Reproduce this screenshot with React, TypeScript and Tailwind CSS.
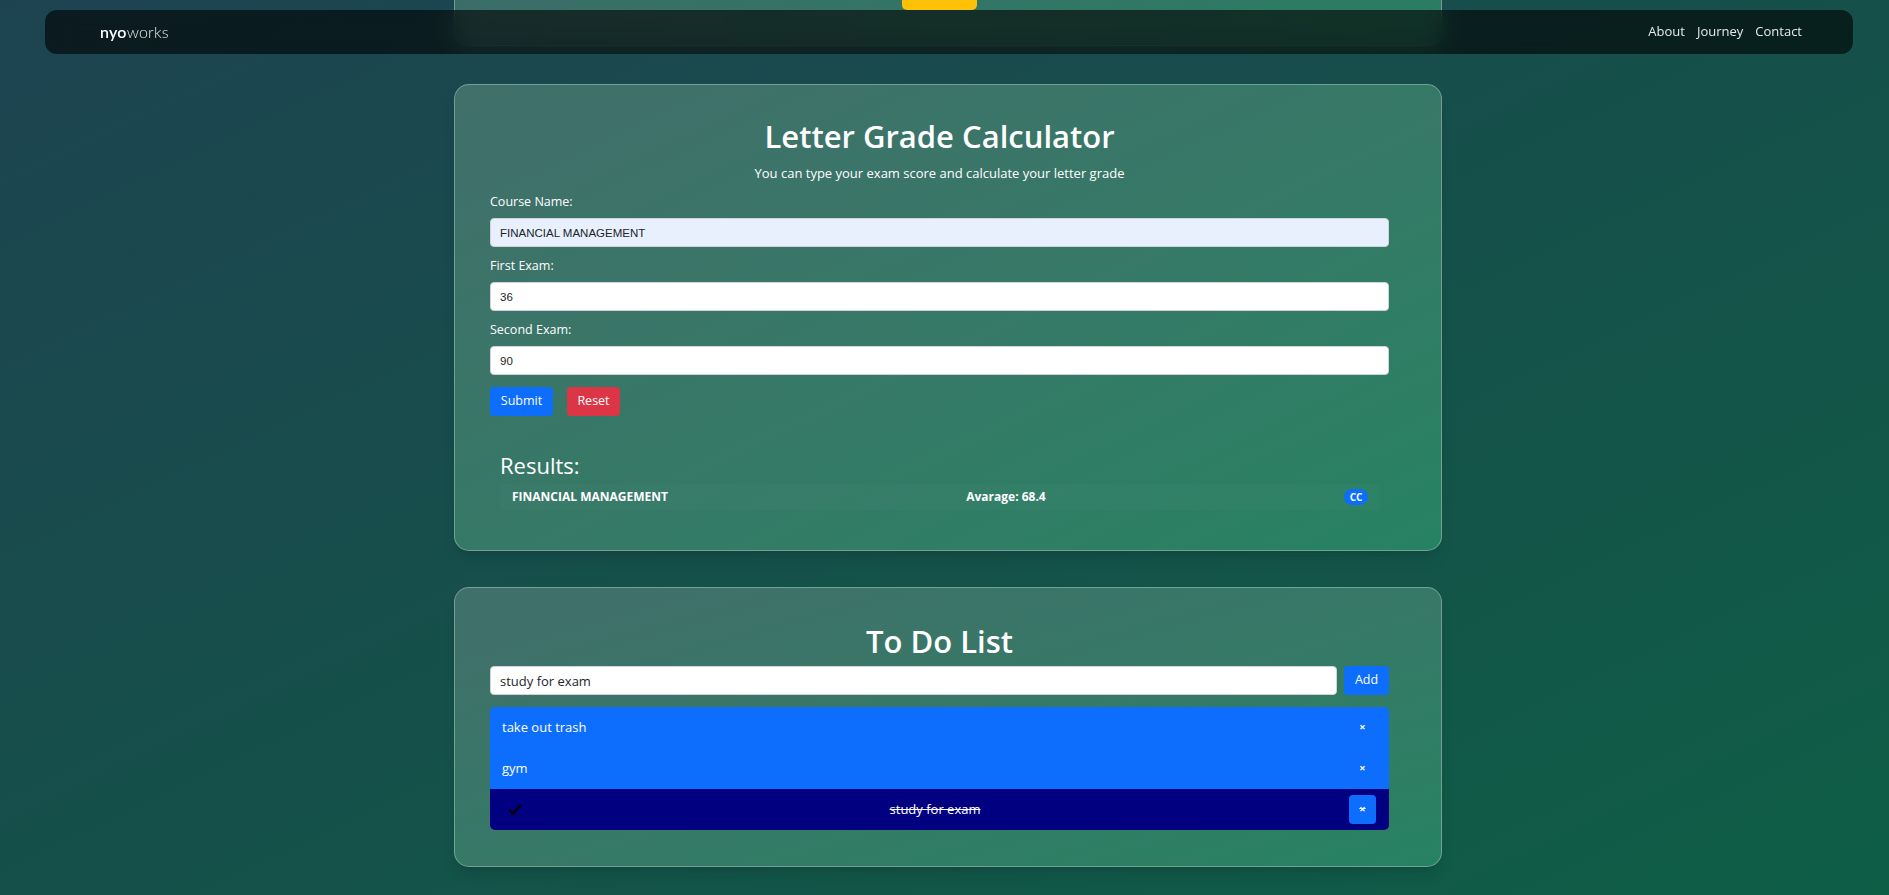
import { useState } from 'react'

type Todo = { id: number; text: string; done: boolean }

const initialTodos: Todo[] = [
  { id: 1, text: 'take out trash', done: false },
  { id: 2, text: 'gym', done: false },
  { id: 3, text: 'study for exam', done: true },
]

function Navbar() {
  return (
    <nav className="fixed top-[10px] left-[45px] z-10 flex h-[44px] w-[1808px] items-center justify-between rounded-[12px] bg-black/60 pl-[55px] pr-[51px] backdrop-blur-md">
      <a className="font-['Lato',sans-serif] text-[16px] tracking-[0.2px] text-white">
        <span className="font-semibold">nyo</span>
        <span className="font-light text-white/90">works</span>
      </a>
      <div className="flex gap-[12px] text-[13px] font-medium text-white/90">
        <a>About</a>
        <a>Journey</a>
        <a>Contact</a>
      </div>
    </nav>
  )
}

function GradeCalculator() {
  const [course, setCourse] = useState('FINANCIAL MANAGEMENT')
  const [first, setFirst] = useState('36')
  const [second, setSecond] = useState('90')

  return (
    <section className="mt-[38px] w-[988px] rounded-[15px] border border-white/30 bg-linear-to-br from-[#416f6b] to-[#268262] pt-[31px] pb-[40px] pl-[35px] pr-[52px] text-white shadow-lg">
      <h1 className="text-center text-[31px] leading-[40px] font-semibold">Letter Grade Calculator</h1>
      <p className="mt-[7px] text-center text-[13px] leading-[20px] font-medium">
        You can type your exam score and calculate your letter grade
      </p>

      <form className="mt-[9px]" onSubmit={(e) => e.preventDefault()}>
        <label className="block text-[12.5px] leading-[20px]">Course Name:</label>
        <input
          value={course}
          onChange={(e) => setCourse(e.target.value)}
          className="mt-[6px] block h-[29px] w-full rounded-[4px] border border-[#ced4da] bg-[#e8f0fe] px-[9px] font-['Liberation_Sans',sans-serif] text-[11.5px] text-[#212529] outline-none"
        />
        <label className="mt-[9px] block text-[12.5px] leading-[20px]">First Exam:</label>
        <input
          value={first}
          onChange={(e) => setFirst(e.target.value)}
          className="mt-[6px] block h-[29px] w-full rounded-[4px] border border-[#ced4da] bg-white px-[9px] font-['Liberation_Sans',sans-serif] text-[11.5px] text-[#212529] outline-none"
        />
        <label className="mt-[9px] block text-[12.5px] leading-[20px]">Second Exam:</label>
        <input
          value={second}
          onChange={(e) => setSecond(e.target.value)}
          className="mt-[6px] block h-[29px] w-full rounded-[4px] border border-[#ced4da] bg-white px-[9px] font-['Liberation_Sans',sans-serif] text-[11.5px] text-[#212529] outline-none"
        />
        <div className="mt-[12px] flex gap-[14px]">
          <button className="h-[29px] w-[63px] rounded-[4px] bg-[#0d6efd] text-[12.5px] font-medium text-white">Submit</button>
          <button
            type="button"
            onClick={() => {
              setCourse('')
              setFirst('')
              setSecond('')
            }}
            className="h-[29px] w-[53px] rounded-[4px] bg-[#dc3545] text-[12.5px] font-medium text-white"
          >
            Reset
          </button>
        </div>
      </form>

      <div className="mt-[35px] pl-[10px]">
        <h3 className="text-[22px] leading-[28px] font-medium">Results:</h3>
        <div className="mt-[5px] mr-[9px] flex h-[26px] items-center justify-between bg-white/[0.02] px-[12px] text-[12px] font-bold">
          <span>FINANCIAL MANAGEMENT</span>
          <span>Avarage: 68.4</span>
          <span className="flex h-[16px] w-[24px] items-center justify-center rounded-full bg-[#0d6efd] text-[10px] leading-none">CC</span>
        </div>
      </div>
    </section>
  )
}

function TodoList() {
  const [todos, setTodos] = useState<Todo[]>(initialTodos)
  const [text, setText] = useState('study for exam')

  const toggle = (id: number) => setTodos((prev) => prev.map((t) => (t.id === id ? { ...t, done: !t.done } : t)))
  const remove = (id: number) => setTodos((prev) => prev.filter((t) => t.id !== id))

  return (
    <section className="mt-[36px] w-[988px] rounded-[15px] border border-white/30 bg-linear-to-br from-[#416f6b] to-[#268262] pt-[33px] pb-[36px] pl-[35px] pr-[52px] text-white shadow-lg">
      <h2 className="text-center text-[31px] leading-[40px] font-semibold">To Do List</h2>
      <div className="mt-[5px] flex gap-[7px]">
        <input
          value={text}
          onChange={(e) => setText(e.target.value)}
          className="h-[29px] flex-1 rounded-[4px] border border-[#ced4da] bg-white px-[9px] text-[13px] text-[#212529] outline-none"
        />
        <button
          onClick={() => {
            if (!text) return
            setTodos((prev) => [...prev, { id: Date.now(), text, done: false }])
            setText('')
          }}
          className="h-[29px] w-[45px] rounded-[4px] bg-[#0d6efd] text-[12.5px] font-medium text-white"
        >
          Add
        </button>
      </div>

      <ul className="mt-[12px] overflow-hidden rounded-[5px]">
        {todos.map((todo) => (
          <li
            key={todo.id}
            onClick={() => toggle(todo.id)}
            className={
              todo.done
                ? 'flex h-[41px] items-center justify-between bg-[#000080] pl-[19px] pr-[13px] text-[13px]'
                : 'flex h-[41px] items-center justify-between bg-[#0d6efd] pl-[12px] pr-[13px] text-[13px]'
            }
          >
            {todo.done && (
              <svg width="12" height="12" viewBox="0 0 12 12" className="shrink-0">
                <path d="M1 6.5 L4 10 L11 1.5" fill="none" stroke="#000" strokeWidth="2.2" strokeLinecap="round" strokeLinejoin="round" />
              </svg>
            )}
            <span className={todo.done ? 'line-through' : ''}>{todo.text}</span>
            <button
              onClick={(e) => {
                e.stopPropagation()
                remove(todo.id)
              }}
              className={
                todo.done
                  ? 'h-[29px] w-[27px] rounded-[4px] bg-[#0d6efd] text-[11px] font-bold text-white line-through'
                  : 'h-[29px] w-[27px] rounded-[4px] bg-[#0d6efd] text-[11px] font-bold text-white'
              }
            >
              ×
            </button>
          </li>
        ))}
      </ul>
    </section>
  )
}

export default function App() {
  return (
    <div className="min-h-screen bg-linear-to-br from-[#1d4351] via-[#15504a] to-[#0e5e46] font-['Open_Sans',sans-serif]">
      <Navbar />
      <main className="flex flex-col items-center pb-[30px] pl-[7px]">
        {/* tail of the card above, page is scrolled */}
        <div className="flex h-[46px] w-[988px] justify-center rounded-b-[15px] border border-t-0 border-white/30 bg-linear-to-r from-[#3a6d68] to-[#2a7d62] pr-[17px]">
          <div className="h-[10px] w-[75px] rounded-b-[5px] bg-[#ffc107]" />
        </div>
        <GradeCalculator />
        <TodoList />
      </main>
    </div>
  )
}
